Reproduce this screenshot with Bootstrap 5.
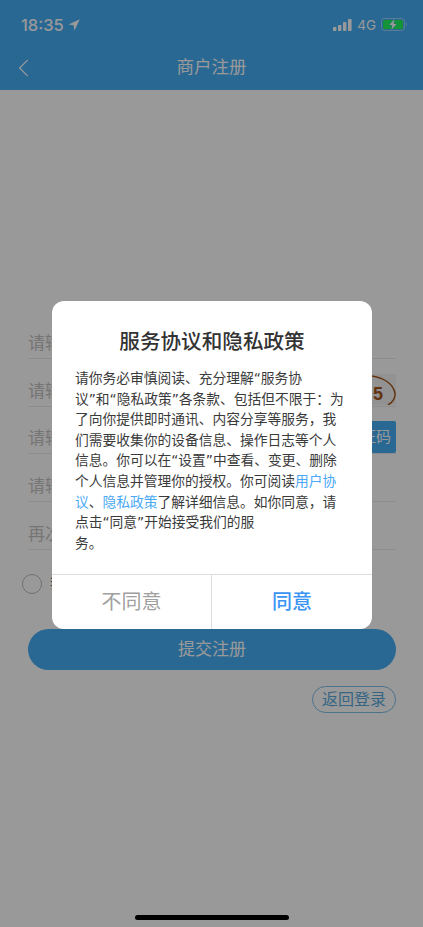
<!DOCTYPE html>
<html lang="zh-CN">
<head>
<meta charset="utf-8">
<meta name="viewport" content="width=device-width, initial-scale=1">
<link href="https://cdn.jsdelivr.net/npm/bootstrap@5.3.0/dist/css/bootstrap.min.css" rel="stylesheet">
<style>
html,body{margin:0;height:100%;background:#fff;}
body{font-family:"Liberation Sans","Noto Sans CJK SC",sans-serif;overflow:hidden;}
.screen{position:relative;width:423px;height:927px;overflow:hidden;background:#fff;}
.app-head{background:#43adf6;color:#fff;height:90px;}
.status-row{height:44px;padding:5px 15px 0 21px;}
.clock{font-family:Inter,"Liberation Sans",sans-serif;font-size:16.5px;font-weight:500;line-height:20px;}
.net-label{font-family:Inter,"Liberation Sans",sans-serif;font-size:13.5px;line-height:14px;margin:0 5px 0 4px;}
.title-row{height:46px;position:relative;}
.back-link{position:absolute;left:18px;top:15px;line-height:0;}
.page-title{font-size:17.5px;line-height:46px;}
.reg-form{padding:221px 27px 0 28px;}
.field-row{height:47.8px;border-bottom:1px solid #ececec;}
.field-input.form-control{border:0;border-radius:0;padding:0;font-size:17px;box-shadow:none;background:transparent;height:28px;}
.field-input.form-control::placeholder{color:#c4c4c4;}
.captcha-pic{width:56px;height:31px;background:#f4f4f4;flex:none;margin-bottom:1px;}
.code-btn{width:84px;height:32px;background:#43adf6;color:#fff;border:0;border-radius:2px;font-size:15px;padding:0 5px 0 0;flex:none;text-align:right;}
.agree-row{margin:24px 0 35px -6px;height:20px;font-size:14px;color:#666;}
.radio-dot{width:20px;height:20px;border:1px solid #bbb;border-radius:50%;flex:none;}
.submit-btn.btn{height:41px;width:100%;background:#43adf6;border:0;color:#fff;border-radius:21px;font-size:17px;padding:0;}
.back-login.btn{width:84px;height:27px;margin-top:16px;border:1px solid #7cbfe9;border-radius:14px;color:#5aa9dd;background:transparent;font-size:16px;line-height:25px;padding:0;}
.dim-layer{position:absolute;inset:0;background:rgba(0,0,0,.4);padding-top:301px;}
.policy-box.card{width:320px;height:328px;border:0;border-radius:12px;overflow:hidden;background:#fff;margin-left:52px;}
.policy-title{font-size:20.6px;font-weight:500;color:#333;line-height:28px;margin:27px 0 0;text-align:center;}
.policy-text{font-family:"DejaVu Sans","Noto Sans CJK SC",sans-serif;font-size:13.75px;line-height:20.6px;color:#3a3a3a;margin:12px 0 0;padding-left:23px;white-space:nowrap;}
.policy-text a{color:#4aa9f5;text-decoration:none;}
.policy-foot{height:55px;border-top:1px solid #dcdcdc;margin-top:auto;}
.foot-btn.btn{border:0;border-radius:0;padding:0;font-size:20px;background:transparent;}
.foot-no.btn{flex:none;width:160px;color:#a0a0a0;border-right:1px solid #dcdcdc;}
.foot-yes.btn{flex:1 1 0;color:#3a94f5;font-weight:500;}
.home-bar{position:absolute;left:135px;bottom:7px;width:154px;height:5px;border-radius:3px;background:#000;}
</style>
</head>
<body>
<div class="screen">
  <header class="app-head">
    <div class="status-row d-flex align-items-center">
      <span class="clock">18:35</span>
      <svg class="ms-1" width="12" height="12" viewBox="0 0 12 12"><path d="M11.800.2.500 5.400l5.100.9.900 5.200z" fill="#fff"/></svg>
      <span class="ms-auto d-flex align-items-center">
        <svg width="20" height="12" viewBox="0 0 20 12" fill="#fff"><rect x="0" y="8" width="3.400" height="4" rx=".7"/><rect x="5" y="6" width="3.400" height="6" rx=".7"/><rect x="10" y="3" width="3.400" height="9" rx=".7"/><rect x="15" y="0" width="3.600" height="12" rx=".7"/></svg>
        <span class="net-label">4G</span>
        <svg width="27" height="13" viewBox="0 0 27 13"><rect x=".5" y=".5" width="23" height="12" rx="3" fill="none" stroke="#fff" stroke-opacity=".45"/><rect x="2" y="2" width="20" height="9" rx="1.500" fill="#22f55c"/><path d="M13.400 1.200 8.400 7h3l-1 4.800L15.600 6h-3z" fill="#fff" stroke="#43adf6" stroke-width=".8" paint-order="stroke"/><path d="M25 4.500c1 .4 1 3.600 0 4z" fill="#fff" fill-opacity=".5"/></svg>
      </span>
    </div>
    <div class="title-row text-center">
      <a class="back-link" href="#" aria-label="返回"><svg width="11" height="18" viewBox="0 0 11 18"><path d="M9.800 .8 1.600 9l8.200 8.200" fill="none" stroke="#fff" stroke-width="1.200"/></svg></a>
      <span class="page-title">商户注册</span>
    </div>
  </header>
  <main class="reg-form">
    <div class="field-row d-flex align-items-end"><input class="form-control field-input" placeholder="请输入手机号"></div>
    <div class="field-row d-flex align-items-end"><input class="form-control field-input" placeholder="请输入图形验证码">
      <svg class="captcha-pic" viewBox="0 0 56 31"><path d="M32 2c12 2 21 8 23 17 .5 5-2 9-7 12" fill="none" stroke="#a5551c" stroke-width="1.500"/><text x="33" y="26" font-family="Liberation Sans" font-size="18" font-weight="700" fill="#a5551c">5</text></svg>
    </div>
    <div class="field-row d-flex align-items-end"><input class="form-control field-input" placeholder="请输入验证码"><button class="code-btn" type="button">验证码</button></div>
    <div class="field-row d-flex align-items-end"><input class="form-control field-input" placeholder="请输入密码"></div>
    <div class="field-row d-flex align-items-end"><input class="form-control field-input" placeholder="再次输入密码"></div>
    <div class="agree-row d-flex align-items-center gap-2"><span class="radio-dot"></span><span>我已阅读并同意</span></div>
    <button class="btn submit-btn" type="button">提交注册</button>
    <div class="d-flex justify-content-end"><button class="btn back-login" type="button">返回登录</button></div>
  </main>
  <div class="dim-layer">
    <div class="card policy-box d-flex flex-column">
      <h2 class="policy-title">服务协议和隐私政策</h2>
      <p class="policy-text">请你务必审慎阅读、充分理解“服务协<br>议”和“隐私政策”各条款、包括但不限于：为<br>了向你提供即时通讯、内容分享等服务，我<br>们需要收集你的设备信息、操作日志等个人<br>信息。你可以在“设置”中查看、变更、删除<br>个人信息并管理你的授权。你可阅读<a href="#">用户协<br>议</a>、<a href="#">隐私政策</a>了解详细信息。如你同意，请<br>点击“同意”开始接受我们的服<br>务。</p>
      <div class="policy-foot d-flex">
        <button class="btn foot-btn foot-no" type="button">不同意</button>
        <button class="btn foot-btn foot-yes" type="button">同意</button>
      </div>
    </div>
    <div class="home-bar"></div>
  </div>
</div>
<script src="https://cdn.jsdelivr.net/npm/bootstrap@5.3.0/dist/js/bootstrap.bundle.min.js"></script>
</body>
</html>
